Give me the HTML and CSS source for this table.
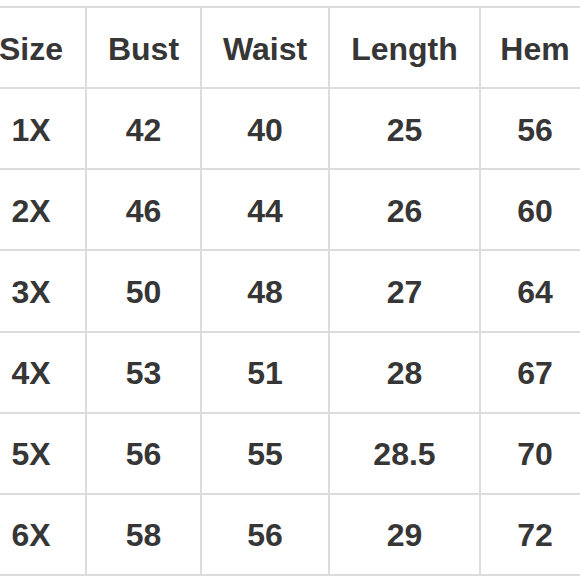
FILE: index.html
```html
<!DOCTYPE html>
<html>
<head>
<meta charset="utf-8">
<link rel="stylesheet" href="styles.css">
</head>
<body>
<div class="chart">
  <div class="cell">Size</div><div class="cell">Bust</div><div class="cell">Waist</div><div class="cell">Length</div><div class="cell">Hem</div>
  <div class="cell">1X</div><div class="cell">42</div><div class="cell">40</div><div class="cell">25</div><div class="cell">56</div>
  <div class="cell">2X</div><div class="cell">46</div><div class="cell">44</div><div class="cell">26</div><div class="cell">60</div>
  <div class="cell">3X</div><div class="cell">50</div><div class="cell">48</div><div class="cell">27</div><div class="cell">64</div>
  <div class="cell">4X</div><div class="cell">53</div><div class="cell">51</div><div class="cell">28</div><div class="cell">67</div>
  <div class="cell">5X</div><div class="cell">56</div><div class="cell">55</div><div class="cell">28.5</div><div class="cell">70</div>
  <div class="cell">6X</div><div class="cell">58</div><div class="cell">56</div><div class="cell">29</div><div class="cell">72</div>
</div>
</body>
</html>
```
FILE: styles.css
```css
html, body {
  margin: 0;
  padding: 0;
  background: #fff;
  overflow: hidden;
}
.chart {
  display: grid;
  grid-template-columns: 108px 113px 126px 149px 108px;
  grid-auto-rows: 79.15px;
  gap: 2px;
  padding: 2px;
  background: #dcdcdc;
  width: max-content;
  margin: 6px 0 0 -25px;
}
.cell {
  background: #fff;
  display: flex;
  align-items: center;
  justify-content: center;
  padding-top: 3px;
  font-family: "Liberation Sans", Arial, sans-serif;
  font-weight: bold;
  font-size: 32px;
  color: #363636;
}
```
